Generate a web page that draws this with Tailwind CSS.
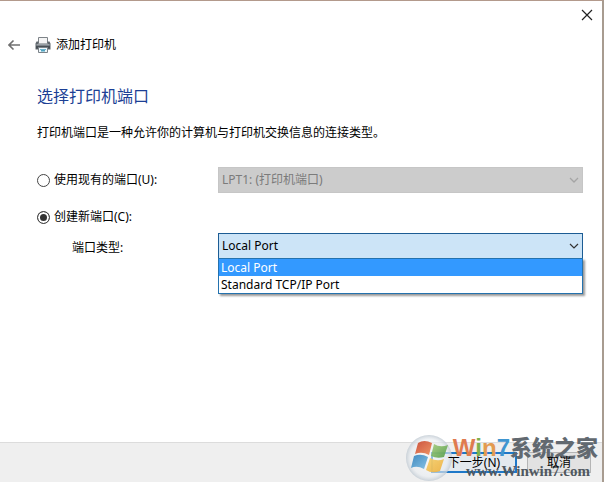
<!DOCTYPE html>
<html lang="zh-CN">
<head>
    <meta charset="UTF-8">
    <meta name="viewport" content="width=device-width, initial-scale=1.0">
    <title>添加打印机</title>
    <script src="https://cdn.jsdelivr.net/npm/@tailwindcss/browser@4"></script>
</head>
<body class="relative flex min-h-screen flex-col overflow-hidden border-t border-r-2 border-t-[#b39a8c] border-r-[#a89c90] bg-white font-['Noto_Sans','Noto_Sans_CJK_SC',sans-serif] text-xs text-black">
<!-- 标题栏 -->
<header>
    <div class="flex justify-end px-[7px] pt-1">
        <button type="button" aria-label="关闭" class="flex h-5 w-4 items-center justify-center">
            <svg class="size-3" viewBox="0 0 12 12" fill="none" stroke="#222" stroke-width="1.2"><path d="M1 1l10 10M11 1L1 11"/></svg>
        </button>
    </div>
    <div class="flex items-center px-2 pt-[10px]">
        <button type="button" aria-label="返回" class="flex h-5 w-3 items-center">
            <svg class="h-3 w-3" viewBox="0 0 12 12" fill="none" stroke="#707070" stroke-width="1.6"><path d="M12 6H1M5.500 1.500L1 6l4.500 4.500"/></svg>
        </button>
        <svg class="ml-[15px] size-4" viewBox="0 0 16 16">
            <path d="M3.500 6V.5h9V6" fill="#f4f4f4" stroke="#7d8388"/>
            <path d="M1.500 4.500h2v2h9v-2h2l1 2v6H.5v-6z" fill="#5f666c"/>
            <path d="M1.500 7h13v1.500h-13z" fill="#9ba1a6"/>
            <path d="M1 9h14v2.500H1z" fill="#484f55"/>
            <path d="M3.500 10.500h9v5h-9z" fill="#eef6fa" stroke="#7c8389"/>
            <path d="M5 12h6v1H5z" fill="#6bb5cf"/>
            <path d="M6 13h4v1.500H6z" fill="#4fa3c0"/>
        </svg>
        <h1 class="ml-[5px] leading-4">添加打印机</h1>
    </div>
</header>

<!-- 端口选择 -->
<main class="flex-1 pr-[19px] pl-[37px]">
    <h2 class="pt-[29px] text-base leading-6 text-[#1c3f95]">选择打印机端口</h2>
    <p class="pt-[15px] leading-5">打印机端口是一种允许你的计算机与打印机交换信息的连接类型。</p>

    <form class="grid grid-cols-[181px_1fr] pt-6">
        <div class="flex h-[26px] items-center gap-1">
            <input id="useExisting" type="radio" name="port" class="size-[13px] appearance-none rounded-full border border-[#444] bg-white checked:bg-[#333] checked:shadow-[inset_0_0_0_2px_white]">
            <label for="useExisting">使用现有的端口(U):</label>
        </div>
        <div class="relative">
            <select disabled aria-label="现有的端口" class="h-[26px] w-full appearance-none border border-[#c6c6c6] bg-[#cccccc] px-[3px] text-[#7b7b7b] opacity-100">
                <option>LPT1: (打印机端口)</option>
            </select>
            <svg class="pointer-events-none absolute top-2 right-1 size-[10px]" viewBox="0 0 10 10" fill="none" stroke="#a5a5a5" stroke-width="1.3"><path d="M1 3l4 4 4-4"/></svg>
        </div>

        <div class="col-span-2 flex h-10 items-center gap-1 pt-2">
            <input id="createNew" type="radio" name="port" checked class="size-[13px] appearance-none rounded-full border border-[#444] bg-white checked:bg-[#333] checked:shadow-[inset_0_0_0_2px_white]">
            <label for="createNew">创建新端口(C):</label>
        </div>

        <label for="portType" class="self-center pt-1 pl-[35px]">端口类型:</label>
        <div class="relative">
            <select id="portType" class="h-[26px] w-full appearance-none border border-[#1c5c94] bg-[#cce4f7] px-[3px]">
                <option>Local Port</option>
                <option>Standard TCP/IP Port</option>
            </select>
            <svg class="pointer-events-none absolute top-2 right-1 size-[10px]" viewBox="0 0 10 10" fill="none" stroke="#333" stroke-width="1.2"><path d="M1 3l4 4 4-4"/></svg>
            <ul role="listbox" aria-label="端口类型" class="absolute top-[25px] w-full border border-[#2472ae] bg-white leading-[17px] shadow-[2px_2px_2px_#999]">
                <li role="option" aria-selected="true" class="bg-[#3399ff] px-[2px] text-white">Local Port</li>
                <li role="option" aria-selected="false" class="px-[2px]">Standard TCP/IP Port</li>
            </ul>
        </div>
    </form>
</main>

<!-- 水印 -->
<div class="pointer-events-none absolute right-1 bottom-0 flex items-center">
    <svg class="size-12" viewBox="0 0 48 48">
        <defs>
            <radialGradient id="orb" cx=".5" cy=".5" r=".5">
                <stop offset="0" stop-color="#fff" stop-opacity=".5"/>
                <stop offset=".8" stop-color="#e9edf1" stop-opacity=".6"/>
                <stop offset="1" stop-color="#c3ccd4" stop-opacity=".85"/>
            </radialGradient>
            <linearGradient id="red" x2="1" y2="1"><stop stop-color="#c9442d"/><stop offset="1" stop-color="#ee8a56"/></linearGradient>
            <linearGradient id="green" x2="1" y2="1"><stop stop-color="#a5cc7b"/><stop offset="1" stop-color="#4f9b45"/></linearGradient>
            <linearGradient id="blue" x2="1" y2="1"><stop stop-color="#2e80bc"/><stop offset="1" stop-color="#7bbce2"/></linearGradient>
            <linearGradient id="yellow" x2="1" y2="1"><stop stop-color="#f6cf68"/><stop offset="1" stop-color="#eeb03c"/></linearGradient>
        </defs>
        <circle cx="24" cy="24" r="23" fill="url(#orb)"/>
        <g opacity=".9">
            <path d="M13 9q6-4 14 0l-3 12q-7-4-14-1z" fill="url(#red)"/>
            <path d="M29 10q6 4 14 1l-4 12q-7 2-13-1z" fill="url(#green)"/>
            <path d="M9 22q7-3 14 1l-4 12q-7-4-13-1z" fill="url(#blue)"/>
            <path d="M25 24q7 4 14 1l-4 12q-8 3-14-1z" fill="url(#yellow)"/>
        </g>
    </svg>
    <div class="flex flex-col">
        <p class="font-['Liberation_Sans','Noto_Sans_CJK_SC',sans-serif] text-[22px] leading-6 font-black text-[#626970]"><span class="text-2xl leading-6"><span class="text-[#e07b4f]">W</span><span class="text-[#7fb04d]">i</span><span class="text-[#e39b50]">n</span><span class="text-[#3f95d0]">7</span></span>系统之家</p>
        <p class="pr-2 text-right font-['Liberation_Serif',serif] text-[15px] leading-5 font-bold text-[#505860]">www.Winwin7.com</p>
    </div>
</div>

<!-- 底部按钮 -->
<footer class="flex h-10 justify-end gap-[10px] border-t border-[#dcdcdc] bg-[#efefef] pt-[9px] pr-[11px]">
    <button type="button" class="h-[21px] w-[86px] border-2 border-[#1f78c8] bg-[#e3e9ee] leading-4"><span class="relative z-10">下一步(N)</span></button>
    <button type="button" class="h-[21px] w-16 border border-[#b5b5b5] bg-[#e2e2e2] leading-4"><span class="relative z-10">取消</span></button>
</footer>
</body>
</html>
